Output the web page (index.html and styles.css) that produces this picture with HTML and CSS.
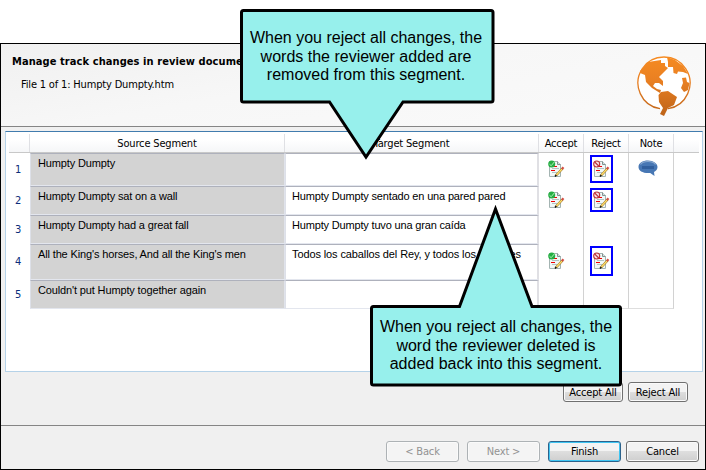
FILE: index.html
```html
<!DOCTYPE html>
<html lang="en">
<head>
<meta charset="utf-8">
<title>Manage track changes</title>
<link rel="stylesheet" href="styles.css">
</head>
<body>
<svg class="defs" width="0" height="0">
  <symbol id="doc" viewBox="0 0 17 17">
    <path d="M1.500 1.500h8l3 3v12h-11z" fill="#f1f8f7" stroke="#a4b4b2"/>
    <path d="M9.500 1.500v3h3" fill="#d5e3e1" stroke="#829391"/>
    <path d="M4 8.500h7M4 12.500h5" stroke="#b4c4c2"/>
    <path d="M6 6.500h3M3 10.500h4" stroke="#f00000"/>
    <path d="M8 15.500l6.500-7" stroke="#9b7426" stroke-width="2.400"/>
    <path d="M8 15.500l6-6.500" stroke="#ffdf6b" stroke-width="1.200"/>
    <path d="M14 9l1.500-1.700" stroke="#d34b42" stroke-width="2.200"/>
    <path d="M7 16.500l1.300-1.500" stroke="#111" stroke-width="1.500"/>
  </symbol>
  <symbol id="accept" viewBox="0 0 17 17">
    <use href="#doc" width="17" height="17"/>
    <circle cx="3.700" cy="4" r="3.500" fill="#25ad43"/>
    <path d="M1.500 4.200l1.700 1.500 3.300-4" fill="none" stroke="#a9f2b5"/>
  </symbol>
  <symbol id="reject" viewBox="0 0 17 17">
    <use href="#doc" width="17" height="17"/>
    <circle cx="3.700" cy="4" r="3" fill="#f8e5e5" stroke="#bd3038" stroke-width="1.100"/>
    <path d="M1.700 2l4 4" stroke="#bd3038" stroke-width="1.100"/>
  </symbol>
</svg>
<main class="dialog">
  <header class="head">
    <div>
      <h1>Manage track changes in review documents</h1>
      <p>File 1 of 1: Humpty Dumpty.htm</p>
    </div>
    <svg class="globe" width="55" height="61" viewBox="0 0 55 61">
      <defs><linearGradient id="og" gradientUnits="userSpaceOnUse" x1="0" y1="0" x2="0" y2="60"><stop offset="0" stop-color="#f68b22"/><stop offset=".4" stop-color="#ea8022"/><stop offset="1" stop-color="#bd6318"/></linearGradient></defs>
      <circle cx="27.500" cy="27" r="26" fill="#fff"/>
      <path d="M24 52.700A26 26 0 1 1 32 52.700" fill="none" stroke="url(#og)" stroke-width="1.300"/>
      <g fill="url(#og)">
        <path d="M4 15L12 6L25 4V7H29V10L32 12L25 19L23 21L27 25V30L23 27H19L17 30L21 33L25 34L24 37L16 32L10 26L9 19L4 17z"/>
        <path d="M31 1L39 4L47 10L52 18L47 16L42 15.500L41 18L37.500 17L37 11H32V6z"/>
        <path d="M46 22L50 21.500L51 26L53.500 27L52 34L48 36L45 32L47 27z"/>
        <path d="M25 36L32 35L41 41L38 49L32 52L28 60L24 58L27 52L23 46L22.500 39z"/>
      </g>
    </svg>
  </header>
  <section class="content">
    <div class="grid-box">
      <div class="row labels">
        <div class="num"></div><div class="src">Source Segment</div><div class="tgt">Target Segment</div><div class="act">Accept</div><div class="act">Reject</div><div class="act">Note</div>
      </div>
      <div class="row r1">
        <div class="num">1</div><div class="src">Humpty Dumpty</div><div class="tgt"></div>
        <div class="act"><svg class="ico"><use href="#accept"/></svg></div>
        <div class="act"><div class="mark"><svg class="ico"><use href="#reject"/></svg></div></div>
        <div class="act"><svg class="note" width="20" height="17" viewBox="0 0 20 17"><path d="M10 .5C15.500.5 19.500 3.500 19.500 7c0 2.300-1.300 4-3.500 5l.5 4-4.300-3C5 13.500.5 11 .5 7S4.500.5 10 .5z" fill="#4777b4"/><path d="M2.500 4.500C5 .5 15 .5 17.500 4.500" fill="none" stroke="#8caad0" stroke-width="1.200"/><path d="M4 7.500h12" stroke="#315f9d" stroke-width="3"/></svg></div>
      </div>
      <div class="row r2">
        <div class="num">2</div><div class="src">Humpty Dumpty sat on a wall</div><div class="tgt">Humpty Dumpty sentado en una pared pared</div>
        <div class="act"><svg class="ico"><use href="#accept"/></svg></div>
        <div class="act"><div class="mark"><svg class="ico"><use href="#reject"/></svg></div></div><div class="act"></div>
      </div>
      <div class="row r3">
        <div class="num">3</div><div class="src">Humpty Dumpty had a great fall</div><div class="tgt">Humpty Dumpty tuvo una gran caída</div><div class="act"></div><div class="act"></div><div class="act"></div>
      </div>
      <div class="row r4">
        <div class="num">4</div><div class="src">All the King's horses, And all the King's men</div><div class="tgt">Todos los caballos del Rey, y todos los hombres</div>
        <div class="act"><svg class="ico"><use href="#accept"/></svg></div>
        <div class="act"><div class="mark"><svg class="ico"><use href="#reject"/></svg></div></div><div class="act"></div>
      </div>
      <div class="row r5">
        <div class="num">5</div><div class="src">Couldn't put Humpty together again</div><div class="tgt"></div><div class="act"></div><div class="act"></div><div class="act"></div>
      </div>
    </div>
    <div class="bulk"><button>Accept All</button><button>Reject All</button></div>
  </section>
  <footer class="foot">
    <button disabled>&lt; Back</button><button disabled>Next &gt;</button><button class="primary">Finish</button><button class="cancel">Cancel</button>
  </footer>
</main>
<aside class="callout first">
  <svg class="shape" width="255" height="152" viewBox="0 0 255 152"><path d="M3.500 1.500H251Q253 1.500 253 3.500V91Q253 93 251 93H163L126 148L89.500 93H3.500Q1.500 93 1.500 91V3.500Q1.500 1.500 3.500 1.500z"/></svg>
  <p>When you reject all changes, the<br>words the reviewer added are<br>removed from this segment.</p>
</aside>
<aside class="callout second">
  <svg class="shape" width="255" height="184" viewBox="0 0 255 184"><path d="M3.500 101.500H89.500L125.500 4L162 101.500H248.500Q250.500 101.500 250.500 103.500V178Q250.500 180 248.500 180H3.500Q1.500 180 1.500 178V103.500Q1.500 101.500 3.500 101.500z"/></svg>
  <p>When you reject all changes, the<br>word the reviewer deleted is<br>added back into this segment.</p>
</aside>
</body>
</html>
```
FILE: styles.css
```css
* { box-sizing: border-box; }
body {
  position: relative; margin: 0; padding-top: 43px; width: 706px; height: 470px;
  overflow: hidden; background: #fff; color: #000;
  font: 11px/14px "DejaVu Sans Condensed", "DejaVu Sans", sans-serif;
  letter-spacing: -.17px;
}
h1, p { margin: 0; }
.defs { position: absolute; }
.dialog {
  display: flex; flex-direction: column; height: 427px;
  border: 1px solid #000; background: #f0f0f0;
}
.head {
  display: flex; justify-content: space-between; height: 83px;
  padding: 11px 14px 0 11px; border-bottom: 1px solid #858585;
  background: linear-gradient(170deg, #f0f0f0, #f7f7f7 45%, #fafafa);
}
h1 { font-size: 11px; line-height: 14px; letter-spacing: .08px; white-space: nowrap; }
.head p { padding: 9px 0 0 9px; }
.globe { margin-top: 1px; }
.content { height: 299px; padding: 4px 2px 0 4px; border-bottom: 1px solid #858585; }
.grid-box {
  height: 241px; padding: 2px 0 0 3px; background: #fff;
  border: 1px solid #b5d2e8; border-top-color: #417cae;
}
.row { display: flex; }
.row > div { flex: none; }
.num { width: 21px; padding-left: 6px; color: #0b2d7b; display: flex; align-items: center; }
.src, .tgt {
  padding: 3px 0 0 7px; border-left: 1px solid #dde0e8; border-top: 1px solid #aeb1bc;
  border-bottom: 1px solid #e3e6ee; white-space: nowrap;
  font: 11px/13px "Liberation Sans", Arial, sans-serif; letter-spacing: -.14px;
}
.src { width: 255px; background: #d3d3d3; border-right: 1px solid #e0e3eb; }
.tgt { width: 254px; padding-left: 6px; border-right: 2px solid #e0e0e4; letter-spacing: -.17px; }
.r4 .tgt { letter-spacing: -.11px; }
.act { width: 45px; border-right: 1px solid #d2d2d2; }
.labels { height: 19px; border-bottom: 1px solid #c8c8c8; margin-right: 3px; background: linear-gradient(#fff 30%, #f5f6f8); }
.labels > div {
  display: flex; align-items: center; justify-content: center; padding: 1px 0 0;
  border-width: 0 1px 0 0; border-right: 1px solid #dfe0e4; background: none;
  font: inherit; letter-spacing: -.17px;
}
.r1 { height: 33px; }
.r2, .r3 { height: 29px; }
.r4 { height: 36px; }
.r5 { height: 29px; }
.r5 .act { border-bottom: 1px solid #dedede; }
.ico { display: block; width: 17px; height: 17px; }
.act > .ico { margin: 7px 0 0 9px; }
.r2 .act > .ico { margin-top: 5px; }
.r4 .act > .ico { margin-top: 8px; }
.mark { width: 23px; height: 28px; margin: 2px 0 0 6px; border: 2px solid #00f; padding: 3px 0 0 1px; }
.r2 .mark { height: 24px; padding-top: 1px; }
.r4 .mark { height: 30px; padding-top: 4px; }
.note { display: block; margin: 7px 0 0 9px; }
button {
  height: 20px; padding: 0; border: 1px solid #707070; border-radius: 3px; color: #000;
  background: linear-gradient(#f3f3f3 0 48%, #dedede 50%, #cfcfcf);
  box-shadow: inset 0 0 0 1px #fafafa; font: inherit; letter-spacing: -.17px;
}
button:disabled { color: #929292; border-color: #adb2b5; background: #f4f4f4; }
.bulk { display: flex; justify-content: flex-end; gap: 5px; padding: 10px 15px 0 0; }
.bulk button { width: 60px; padding-top: 1px; }
.foot { display: flex; justify-content: flex-end; gap: 8px; padding: 15px 6px 0 0; }
.foot button { width: 73px; height: 21px; padding-top: 1px; }
.foot .primary { border-color: #2c628b; box-shadow: inset 0 0 0 1px #3fc5f2; }
.foot .cancel { margin-left: -3px; }
.callout { position: absolute; font: 16px/18.600px "Liberation Sans", Arial, sans-serif; letter-spacing: 0; text-align: center; white-space: nowrap; }
.callout p { position: relative; width: 252px; }
.shape { position: absolute; left: 0; top: 0; fill: #97f0ec; stroke: #000; stroke-width: 3; }
.first { left: 240px; top: 9px; }
.first p { padding-top: 20px; }
.second { left: 370px; top: 205px; }
.second p { padding-top: 113px; }
```
